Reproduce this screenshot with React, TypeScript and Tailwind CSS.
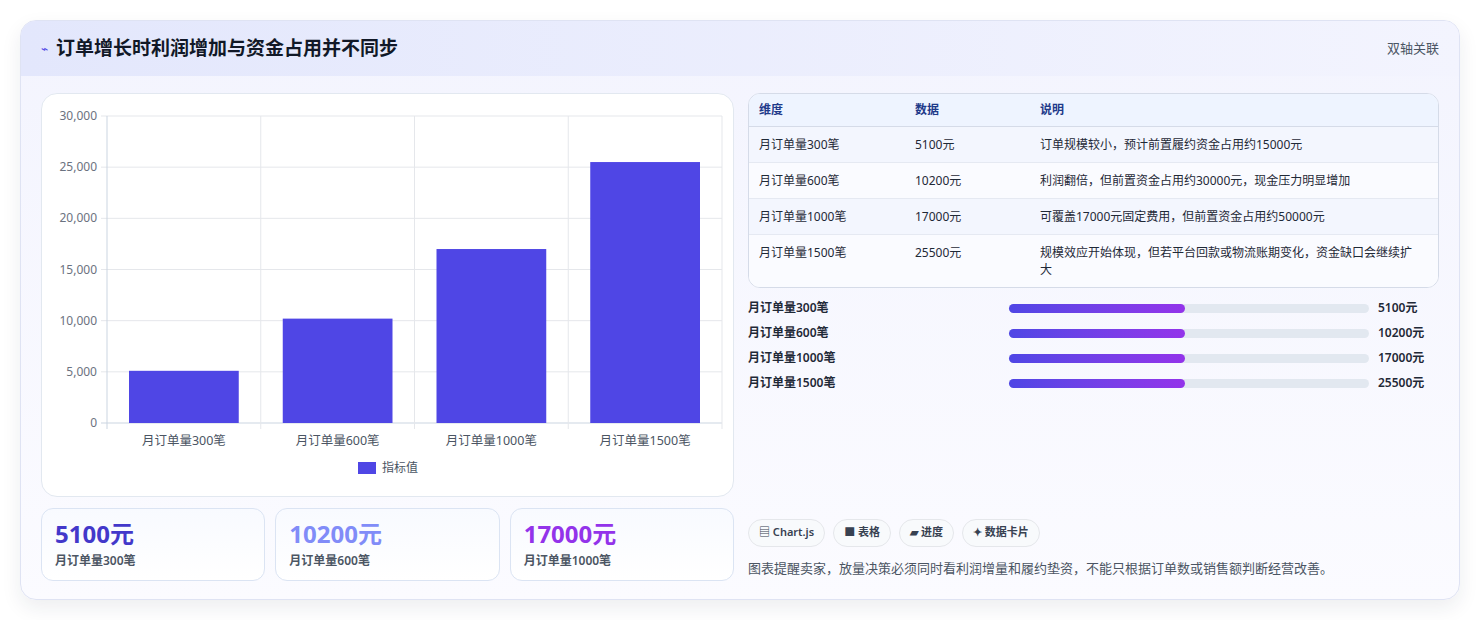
import React from "react";

const font = { fontFamily: '"Noto Sans", "Noto Sans CJK SC", sans-serif' };
const rows = [
  ["月订单量300笔", "5100元", "订单规模较小，预计前置履约资金占用约15000元"],
  ["月订单量600笔", "10200元", "利润翻倍，但前置资金占用约30000元，现金压力明显增加"],
  ["月订单量1000笔", "17000元", "可覆盖17000元固定费用，但前置资金占用约50000元"],
  ["月订单量1500笔", "25500元", "规模效应开始体现，但若平台回款或物流账期变化，资金缺口会继续扩大"],
];
const vals = [5100, 10200, 17000, 25500];

function Chart() {
  const x0 = 65, x1 = 680, yTop = 22, yBot = 329;
  const h = yBot - yTop;
  const cw = (x1 - x0) / 4;
  return (
    <svg width="693" height="404" className="block">
      {[0, 1, 2, 3, 4, 5, 6].map((i) => {
        const y = yBot - (h * i) / 6;
        return (
          <g key={i}>
            <line x1={x0 - 6} x2={x1} y1={y} y2={y} stroke={i === 0 ? "#cbd5e1" : "#e5e7eb"} />
            <text x={x0 - 10} y={y + 4} textAnchor="end" fontSize="12" fill="#6b7280">
              {(i * 5000).toLocaleString("en-US")}
            </text>
          </g>
        );
      })}
      {[0, 1, 2, 3, 4].map((i) => (
        <line key={i} x1={x0 + cw * i} x2={x0 + cw * i} y1={yTop} y2={yBot + 6} stroke={i === 0 ? "#cbd5e1" : "#e5e7eb"} />
      ))}
      {vals.map((v, i) => {
        const bh = (v / 30000) * h;
        return (
          <g key={i}>
            <rect x={x0 + cw * i + 22} y={yBot - bh} width={cw - 44} height={bh} fill="#4f46e5" />
            <text x={x0 + cw * i + cw / 2} y={yBot + 22} textAnchor="middle" fontSize="12.5" fill="#4b5563">
              {rows[i][0]}
            </text>
          </g>
        );
      })}
      <rect x={316} y={368} width={18} height={12} fill="#4f46e5" />
      <text x={340} y={378} fontSize="12" fill="#4b5563">指标值</text>
    </svg>
  );
}

export default function App() {
  return (
    <div className="w-[1480px] h-[620px] bg-white p-5" style={font}>
      <div className="h-[580px] rounded-2xl border border-[#dfe3f3] bg-gradient-to-b from-[#f3f4fe] to-[#fbfbff] shadow-[0_8px_20px_rgba(30,41,59,0.08)] overflow-hidden">
        <div className="h-[55px] flex items-center justify-between px-5 bg-gradient-to-r from-[#e3e7fc] to-[#f3f4fe]">
          <div className="flex items-center gap-2">
            <span className="text-[#4f46e5] text-xs">⌁</span>
            <span className="text-[19px] font-bold text-[#111827]">订单增长时利润增加与资金占用并不同步</span>
          </div>
          <span className="text-[13px] text-[#4b5563]">双轴关联</span>
        </div>
        <div className="flex gap-[14px] px-5 pt-[17px]">
          <div className="w-[693px] flex flex-col gap-[11px]">
            <div className="h-[404px] bg-white rounded-2xl border border-[#e2e8f0]">
              <Chart />
            </div>
            <div className="flex gap-[10px]">
              {[
                ["5100元", "text-[#4338ca]", "月订单量300笔"],
                ["10200元", "text-[#818cf8]", "月订单量600笔"],
                ["17000元", "text-[#9333ea]", "月订单量1000笔"],
              ].map(([v, c, l]) => (
                <div key={v} className="flex-1 h-[73px] rounded-xl border border-[#dbe4f3] bg-gradient-to-b from-[#f8faff] to-white px-[13px] pt-[10px]">
                  <div className={`text-[24px] font-bold leading-[30px] ${c}`}>{v}</div>
                  <div className="text-[12px] font-semibold text-[#4b5563] mt-[3px]">{l}</div>
                </div>
              ))}
            </div>
          </div>
          <div className="w-[693px] flex flex-col">
            <div className="rounded-xl border border-[#d5dbe8] overflow-hidden bg-white">
              <div className="flex h-[33px] items-center bg-[#eef4ff] border-b border-[#d5dbe8] text-[12px] font-semibold text-[#1e3a8a]">
                <div className="w-[166px] pl-[10px]">维度</div>
                <div className="w-[125px]">数据</div>
                <div className="flex-1">说明</div>
              </div>
              {rows.map((r, i) => (
                <div key={i} className={`flex py-[9px] text-[12px] text-[#1f2937] leading-[17px] ${i < 3 ? "border-b border-[#e5e9f2]" : ""} ${i % 2 === 0 ? "bg-[#f3f6fe]" : "bg-[#fafbff]"}`}>
                  <div className="w-[166px] pl-[10px]">{r[0]}</div>
                  <div className="w-[125px]">{r[1]}</div>
                  <div className="flex-1 pr-4">{r[2]}</div>
                </div>
              ))}
            </div>
            <div className="flex flex-col gap-[7px] mt-[11px]">
              {rows.map((r, i) => (
                <div key={i} className="flex items-center h-[18px] text-[12px] font-semibold text-[#1f2937]">
                  <div className="w-[261px]">{r[0]}</div>
                  <div className="w-[360px] h-[9px] rounded-full bg-[#e2e8f0]">
                    <div className="h-full w-[176px] rounded-full bg-gradient-to-r from-[#4f46e5] to-[#9333ea]" />
                  </div>
                  <div className="ml-[9px]">{r[1]}</div>
                </div>
              ))}
            </div>
            <div className="mt-auto mb-[3px]">
              <div className="flex gap-[8px]">
                {["▤ Chart.js", "■ 表格", "▰ 进度", "✦ 数据卡片"].map((t) => (
                  <span key={t} className="h-[28px] px-[10px] flex items-center rounded-full border border-[#e5e7eb] bg-[#f8fafc] text-[11px] font-semibold text-[#374151]">{t}</span>
                ))}
              </div>
              <div className="text-[13px] text-[#4b5563] mt-[12px]">图表提醒卖家，放量决策必须同时看利润增量和履约垫资，不能只根据订单数或销售额判断经营改善。</div>
            </div>
          </div>
        </div>
      </div>
    </div>
  );
}
